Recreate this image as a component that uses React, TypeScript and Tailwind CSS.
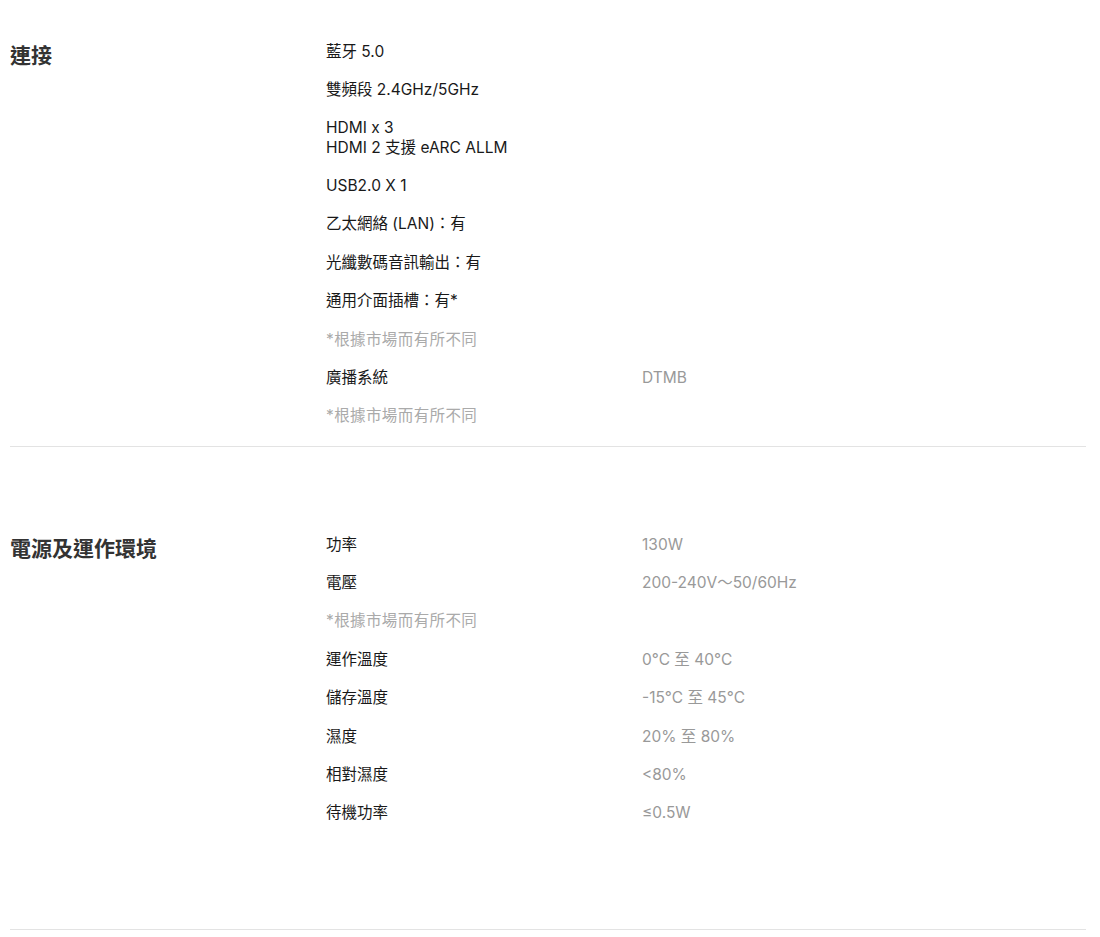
import React from 'react';

type Row = { label: string; value?: string; note?: boolean };

const connect: Row[] = [
    { label: '藍牙 5.0' },
    { label: '雙頻段 2.4GHz/5GHz' },
    { label: 'HDMI x 3\nHDMI 2 支援 eARC ALLM' },
    { label: 'USB2.0 X 1' },
    { label: '乙太網絡 (LAN)：有' },
    { label: '光纖數碼音訊輸出：有' },
    { label: '通用介面插槽：有*' },
    { label: '*根據市場而有所不同', note: true },
    { label: '廣播系統', value: 'DTMB' },
    { label: '*根據市場而有所不同', note: true },
];

const power: Row[] = [
    { label: '功率', value: '130W' },
    { label: '電壓', value: '200-240V～50/60Hz' },
    { label: '*根據市場而有所不同', note: true },
    { label: '運作溫度', value: '0°C 至 40°C' },
    { label: '儲存溫度', value: '-15°C 至 45°C' },
    { label: '濕度', value: '20% 至 80%' },
    { label: '相對濕度', value: '<80%' },
    { label: '待機功率', value: '≤0.5W' },
];

const SpecSection: React.FC<{ title: string; rows: Row[]; className: string }> = ({ title, rows, className }) => (
    <section className={`flex border-b border-[#e3e3e3] ${className}`}>
        <h3 className="w-[316px] shrink-0 pt-[10px] text-[21px] leading-[28px] font-bold text-[#333]">{title}</h3>
        <div className="flex flex-col">
            {rows.map((r, i) => (
                <div key={i} className="flex py-[9.6px] text-[15.5px] leading-[19.2px]">
                    <p className={`w-[316px] whitespace-pre-line ${r.note ? 'text-[#aaa] tracking-[0.4px]' : 'text-[#191919]'}`}>
                        {r.label}
                    </p>
                    {r.value && <p className="text-[#999]">{r.value}</p>}
                </div>
            ))}
        </div>
    </section>
);

export default function App() {
    return (
        <div
            className="w-[1100px] h-[937px] bg-white pl-[10px] pr-[14px] pt-[32px]"
            style={{ fontFamily: 'Inter, "Noto Sans CJK TC", sans-serif' }}
        >
            <SpecSection title="連接" rows={connect} className="pb-[11px]" />
            <SpecSection title="電源及運作環境" rows={power} className="mt-[78px] pb-[97px]" />
        </div>
    );
}
